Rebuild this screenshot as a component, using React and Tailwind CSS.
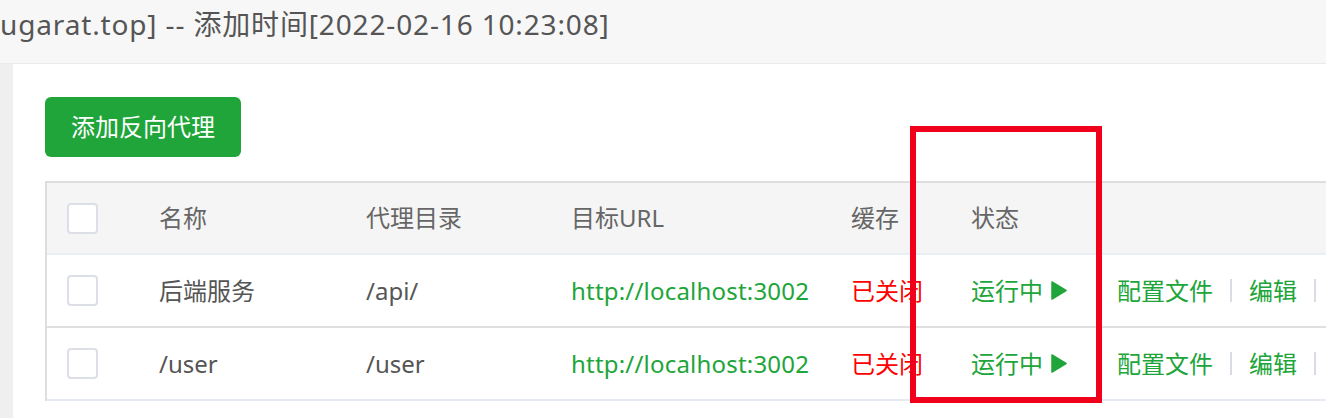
import React from 'react';

const rows = [
    { name: '后端服务', dir: '/api/', url: 'http://localhost:3002' },
    { name: '/user', dir: '/user', url: 'http://localhost:3002' },
];

function Checkbox() {
    return <div className="w-[31px] h-[31px] border-2 border-[#dcdfe6] rounded-[4px] bg-white" />;
}

function PlayIcon() {
    return (
        <svg width="16" height="19" viewBox="0 0 16 19" className="ml-[8px]">
            <polygon points="1,1 15,9.5 1,18" fill="#20a53a" stroke="#20a53a" strokeWidth="1.5" strokeLinejoin="round" />
        </svg>
    );
}

function Sep() {
    return <span className="mx-[17px] w-[2px] h-[23px] bg-[#d8dce3]" />;
}

export default function App() {
    return (
        <div className="relative w-[1326px] h-[418px] overflow-hidden bg-white font-['Noto_Sans','Noto_Sans_CJK_SC',sans-serif]">
            {/* barre du haut */}
            <div className="h-[64px] bg-[#f7f7f7] border-b border-[#ebebeb] pt-[5px]">
                <p className="text-[28px] leading-[38px] text-[#555] whitespace-nowrap tracking-[0.85px]">
                    ugarat.top] -- 添加时间[2022-02-16 10:23:08]
                </p>
            </div>

            <div className="flex h-[354px]">
                <div className="w-[13px] bg-[#efefef] shrink-0" />
                <div className="flex-1 pl-[32px] pt-[33px] overflow-hidden">
                    <button className="w-[196px] h-[60px] bg-[#20a53a] rounded-[6px] text-white text-[24px] flex items-center justify-center">
                        添加反向代理
                    </button>

                    {/* tableau */}
                    <div className="mt-[24px] w-[1400px] border-t-2 border-l-2 border-[#dedede] text-[24px]">
                        <div className="flex items-center h-[72px] bg-[#f5f5f5] border-b-2 border-[#e9edf4] text-[#666]">
                            <div className="w-[92px] pl-[20px] shrink-0"><Checkbox /></div>
                            <div className="w-[207px] pl-[20px] shrink-0">名称</div>
                            <div className="w-[205px] pl-[20px] shrink-0">代理目录</div>
                            <div className="w-[280px] pl-[20px] shrink-0">目标URL</div>
                            <div className="w-[120px] pl-[20px] shrink-0">缓存</div>
                            <div className="w-[146px] pl-[20px] shrink-0">状态</div>
                            <div className="flex-1 pl-[20px]" />
                        </div>
                        {rows.map((r, i) => (
                            <div
                                key={i}
                                className={`flex items-center h-[73px] border-b-2 ${i === rows.length - 1 ? 'border-[#e6eaf1]' : 'border-[#e0e0e0]'}`}
                            >
                                <div className="w-[92px] pl-[20px] shrink-0"><Checkbox /></div>
                                <div className="w-[207px] pl-[20px] shrink-0 text-[#555]">{r.name}</div>
                                <div className="w-[205px] pl-[20px] shrink-0 text-[#555]">{r.dir}</div>
                                <div className="w-[280px] pl-[20px] shrink-0 text-[#20a53a] tracking-[0.2px]">{r.url}</div>
                                <div className="w-[120px] pl-[20px] shrink-0 text-[#f00]">已关闭</div>
                                <div className="w-[146px] pl-[20px] shrink-0 text-[#20a53a] flex items-center">
                                    运行中<PlayIcon />
                                </div>
                                <div className="flex-1 pl-[20px] text-[#20a53a] flex items-center whitespace-nowrap">
                                    配置文件<Sep />编辑<Sep />
                                </div>
                            </div>
                        ))}
                    </div>
                </div>
            </div>

            {/* cadre rouge */}
            <div className="absolute left-[910px] top-[126px] w-[192px] h-[277px] border-[6px] border-[#f0001b]" />
        </div>
    );
}
